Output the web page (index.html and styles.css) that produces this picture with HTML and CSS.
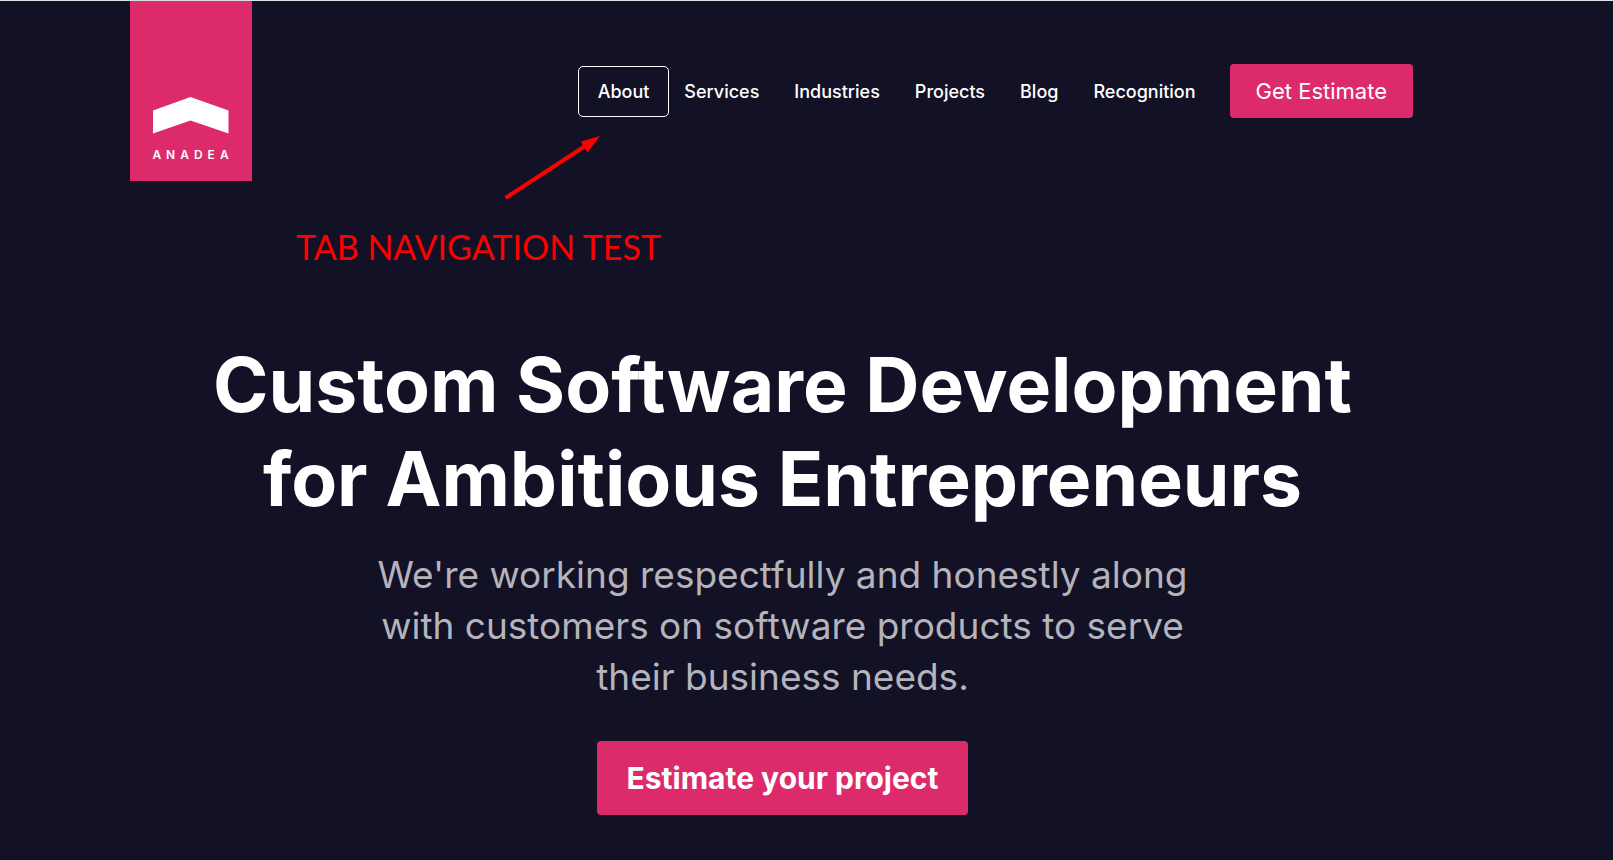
FILE: index.html
```html
<!DOCTYPE html>
<html lang="en">
<head>
<meta charset="utf-8">
<meta name="viewport" content="width=device-width, initial-scale=1">
<title>Anadea</title>
<link rel="stylesheet" href="styles.css">
</head>
<body>
<header class="header">
  <a class="logo" href="#">
    <svg class="logo-mark" viewBox="0 0 76 37" width="76" height="37" aria-hidden="true">
      <path d="M0 13.500 37.500 0 75.500 13.500V36.500L37.500 23.500 0 36.500Z" fill="#fff"/>
    </svg>
    <span class="logo-name">ANADEA</span>
  </a>
  <nav class="nav">
    <a class="nav-link nav-link-focused" href="#">About</a>
    <a class="nav-link" href="#">Services</a>
    <a class="nav-link" href="#">Industries</a>
    <a class="nav-link" href="#">Projects</a>
    <a class="nav-link" href="#">Blog</a>
    <a class="nav-link" href="#">Recognition</a>
    <button class="button button-small" type="button">Get Estimate</button>
  </nav>
</header>
<main class="hero">
  <h1 class="title">Custom Software Development<br>for Ambitious Entrepreneurs</h1>
  <p class="lead">We're working respectfully and honestly along<br>with customers on software products to serve<br>their business needs.</p>
  <button class="button button-large" type="button">Estimate your project</button>
</main>
<div class="note">
  <svg class="note-arrow" viewBox="0 0 96 66" width="96" height="66" aria-hidden="true">
    <path d="M3 62 82 10.500" stroke="#f00" stroke-width="4" stroke-linecap="round"/>
    <path d="M96 1 77 6.500 79 11 83 16.500 84 17Z" fill="#f00"/>
  </svg>
  <span class="note-text">TAB NAVIGATION TEST</span>
</div>
</body>
</html>
```
FILE: styles.css
```css
* {
  box-sizing: border-box;
}

body {
  position: relative;
  min-height: 100vh;
  margin: 0;
  padding: 0 178px 0 130px;
  border-top: 1px solid #dcdfe3;
  background: #131126;
  color: #fff;
  font-family: Inter, "Open Sans", sans-serif;
}

.header {
  display: flex;
  justify-content: space-between;
  align-items: flex-start;
  padding-right: 22px;
}

.logo {
  display: flex;
  flex-direction: column;
  align-items: center;
  gap: 13px;
  width: 122px;
  height: 180px;
  padding-top: 96px;
  background: #dd2a6b;
  color: #fff;
  text-decoration: none;
}

.logo-mark {
  display: block;
}

.logo-name {
  padding-left: 4px;
  font-size: 12px;
  font-weight: 600;
  line-height: 16px;
  letter-spacing: 5px;
}

.nav {
  display: flex;
  align-items: center;
  gap: 1px;
  padding-top: 63px;
}

.nav-link {
  padding: 9px 17px;
  color: #fff;
  font-size: 18px;
  font-weight: 500;
  line-height: 27px;
  text-decoration: none;
}

.nav-link-focused {
  border-radius: 2px;
  outline: 1px solid #fff;
  outline-offset: 2px;
}

.button {
  border: 0;
  border-radius: 4px;
  background: #dd2a6b;
  color: #fff;
  font-family: inherit;
  cursor: pointer;
}

.button-small {
  margin-left: 16px;
  padding: 13px 26px;
  font-size: 22px;
  line-height: 28px;
}

.button-large {
  padding: 18px 30px;
  font-size: 30px;
  font-weight: 700;
  line-height: 38px;
}

.hero {
  display: flex;
  flex-direction: column;
  align-items: center;
  padding-top: 157px;
  text-align: center;
}

.title {
  margin: 0;
  font-size: 75px;
  font-weight: 700;
  line-height: 94px;
  white-space: nowrap;
}

.lead {
  margin: 23px 0 39px;
  color: #b5b3bb;
  font-size: 37px;
  line-height: 51px;
}

.note {
  position: absolute;
  top: 134px;
  left: 296px;
  display: flex;
  flex-direction: column;
  color: #f00;
  font-family: Lato, sans-serif;
}

.note-arrow {
  margin-left: 208px;
}

.note-text {
  margin-top: 24px;
  font-size: 34px;
  line-height: 44px;
  white-space: nowrap;
}
```
